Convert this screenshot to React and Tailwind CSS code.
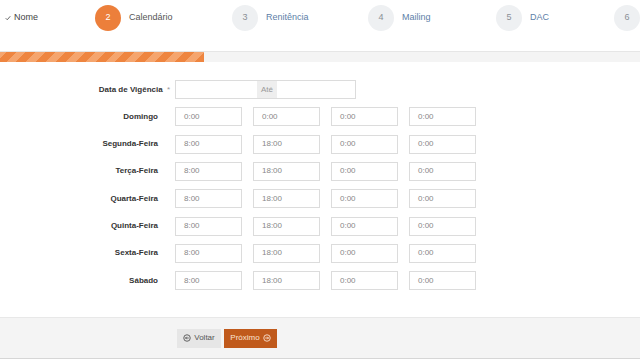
import React from 'react';

const days = [
  { label: 'Domingo', values: ['0:00', '0:00', '0:00', '0:00'] },
  { label: 'Segunda-Feira', values: ['8:00', '18:00', '0:00', '0:00'] },
  { label: 'Terça-Feira', values: ['8:00', '18:00', '0:00', '0:00'] },
  { label: 'Quarta-Feira', values: ['8:00', '18:00', '0:00', '0:00'] },
  { label: 'Quinta-Feira', values: ['8:00', '18:00', '0:00', '0:00'] },
  { label: 'Sexta-Feira', values: ['8:00', '18:00', '0:00', '0:00'] },
  { label: 'Sábado', values: ['8:00', '18:00', '0:00', '0:00'] },
];

function Step({ num, label, width, active }) {
  return (
    <div className={`flex items-center gap-[8px] shrink-0 ${width}`}>
      <div
        className={`w-[26px] h-[26px] rounded-full flex items-center justify-center text-[9px] shrink-0 ${
          active ? 'bg-[#ec7f3b] text-white' : 'bg-[#eef0f2] text-[#8a8f96]'
        }`}
      >
        {num}
      </div>
      {label && (
        <span className={`text-[9px] ${active ? 'text-[#555]' : 'text-[#5d80a8]'}`}>{label}</span>
      )}
    </div>
  );
}

function TimeInput({ value }) {
  return (
    <div className="w-[67px] h-[19px] border border-[#dcdcdc] bg-white flex items-center pl-[8px] text-[8px] text-[#888]">
      {value}
    </div>
  );
}

export default function App() {
  return (
    <div className="w-[640px] h-[360px] bg-white overflow-hidden font-['Liberation_Sans',Arial,sans-serif] flex flex-col">
      {/* Wizard steps */}
      <div className="h-[34px] mt-[1px] flex items-center">
        <div className="w-[95px] shrink-0 pl-[5px] flex items-center gap-[3px] text-[9px] text-[#444]">
          <svg width="6" height="6" viewBox="0 0 12 12" fill="none" stroke="#666" strokeWidth="2">
            <path d="M1.5 6.5 4.5 9.5 10.5 2.5" />
          </svg>
          <span>Nome</span>
        </div>
        <Step num="2" label="Calendário" width="w-[137px]" active />
        <Step num="3" label="Renitência" width="w-[136px]" />
        <Step num="4" label="Mailing" width="w-[128px]" />
        <Step num="5" label="DAC" width="w-[118px]" />
        <Step num="6" width="w-[26px]" />
      </div>

      {/* Progress */}
      <div className="mt-[16px] h-[11px] flex bg-[#f4f4f4] border-t border-[#e6e6e6]">
        <div className="w-[204px] h-full bg-[repeating-linear-gradient(-45deg,#ee8540_0px,#ee8540_7px,#f5a56e_7px,#f5a56e_14px)]" />
      </div>

      {/* Form */}
      <div className="mt-[18px] flex flex-col gap-[8.33px]">
        <div className="flex items-center">
          <div className="w-[175px] pr-[5px] text-right text-[8px] font-bold text-[#333]">
            Data de Vigência <span className="font-normal text-[#999] ml-[2px]">*</span>
          </div>
          <div className="w-[181px] h-[19px] border border-[#dcdcdc] flex">
            <div className="flex-1" />
            <div className="w-[20px] bg-[#eeeeee] flex items-center justify-center text-[8px] text-[#999]">Até</div>
            <div className="w-[78px]" />
          </div>
        </div>
        {days.map((d) => (
          <div key={d.label} className="flex items-center">
            <div className="w-[175px] pr-[17px] text-right text-[8px] font-bold text-[#333]">{d.label}</div>
            <div className="flex gap-[11px]">
              {d.values.map((v, i) => (
                <TimeInput key={i} value={v} />
              ))}
            </div>
          </div>
        ))}
      </div>

      {/* Footer */}
      <div className="mt-[27px] h-[42px] bg-[#f4f4f4] border-t border-[#e8e8e8] border-b border-b-[#d6d6d6] flex items-center pl-[177px] gap-[3px]">
        <button className="w-[44px] h-[19px] bg-[#e6e6e6] flex items-center justify-center gap-[3px] text-[8px] text-[#555]">
          <svg width="8" height="8" viewBox="0 0 16 16" fill="none" stroke="#555" strokeWidth="1.8">
            <circle cx="8" cy="8" r="6.5" />
            <path d="M11.5 8H5M7.5 5.5 5 8l2.5 2.5" />
          </svg>
          Voltar
        </button>
        <button className="w-[53px] h-[19px] bg-[#c05a1c] flex items-center justify-center gap-[3px] text-[8px] text-[#fbe3d3]">
          Próximo
          <svg width="8" height="8" viewBox="0 0 16 16" fill="none" stroke="#fbe3d3" strokeWidth="1.8">
            <circle cx="8" cy="8" r="6.5" />
            <path d="M4.5 8H11M8.5 5.5 11 8l-2.5 2.5" />
          </svg>
        </button>
      </div>
    </div>
  );
}
